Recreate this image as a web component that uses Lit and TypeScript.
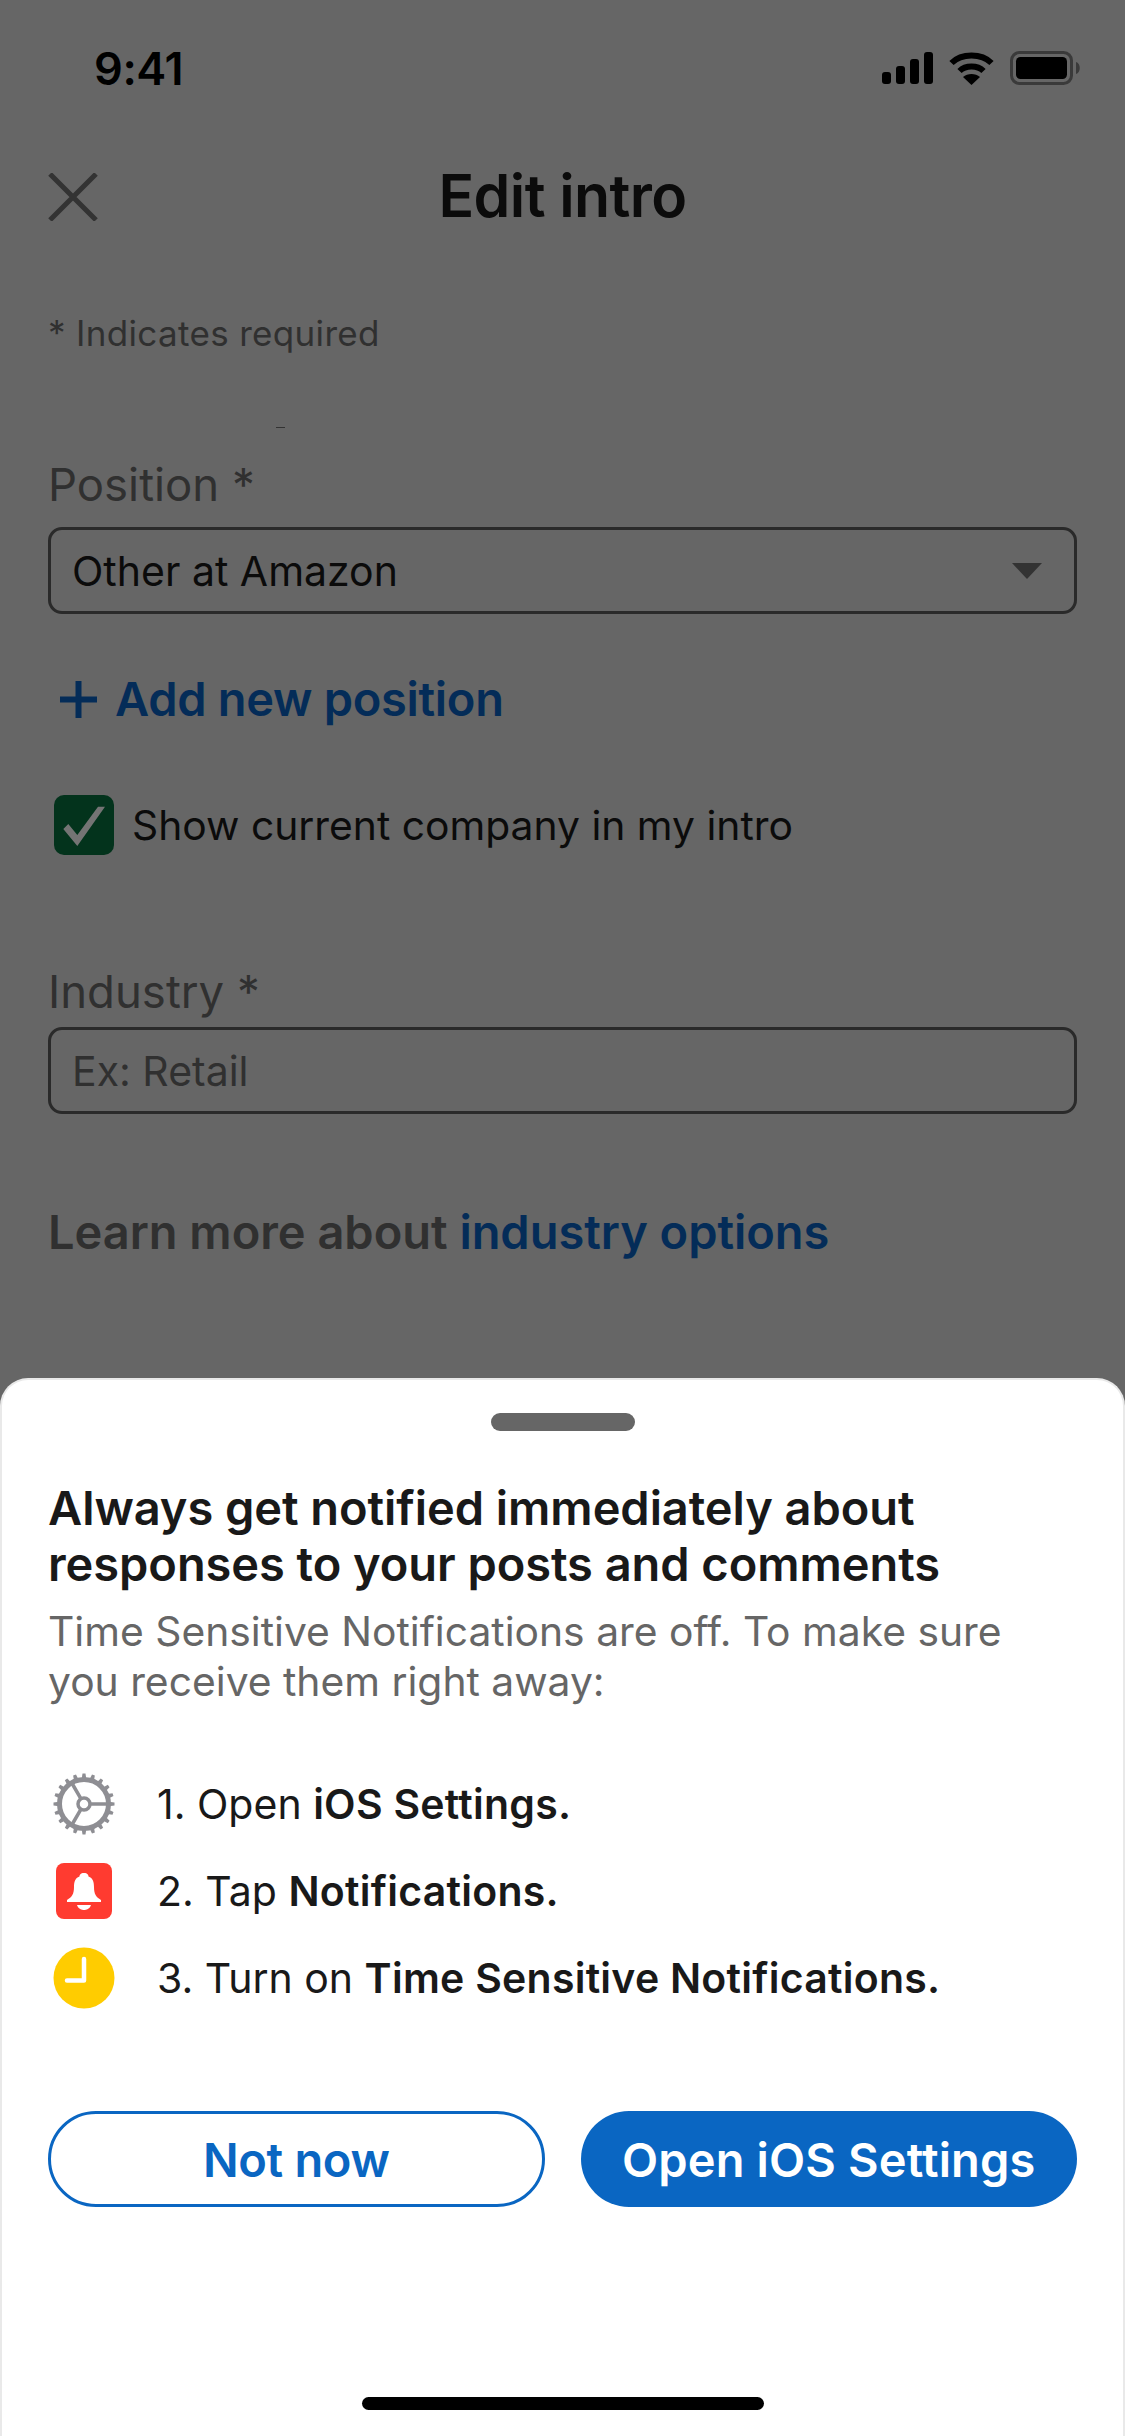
import { LitElement, html, css, svg } from 'lit';
import { customElement } from 'lit/decorators.js';

const FONT = css`Inter, "Liberation Sans", sans-serif`;

@customElement('app-root')
export class AppRoot extends LitElement {
  static styles = css`
    :host {
      display: flex;
      flex-direction: column;
      width: 1125px;
      height: 2436px;
      overflow: hidden;
      background: #666666;
      font-family: ${FONT};
      color: #0b0b0b;
    }
    .form { flex: 1; min-height: 0; display: flex; flex-direction: column; }

    .status { height: 136px; display: flex; align-items: center; justify-content: space-between; padding: 0 43px 0 94px; box-sizing: border-box; }
    .time { font-size: 45px; font-weight: 600; color: #000; letter-spacing: -0.4px; }
    .status-icons { display: flex; align-items: center; gap: 16px; }

    .nav { height: 120px; display: flex; align-items: center; justify-content: center; position: relative; }
    .close { position: absolute; left: 48px; top: 37px; }
    .title { font-size: 59px; font-weight: 600; letter-spacing: -0.6px; margin-top: -2px; }

    .body { padding: 0 48px; display: flex; flex-direction: column; }
    .required { font-size: 35px; color: #303030; margin-top: 55px; line-height: 44px; letter-spacing: 0.33px; }
    .tick { width: 9px; height: 1px; background: #333; margin: 72px 0 0 228px; }
    .label { font-size: 45.5px; color: #303030; line-height: 56px; }
    .position { margin-top: 29px; }
    .industry { margin-top: 109px; }
    .field { height: 87px; box-sizing: border-box; border: 3.5px solid #2a2a2a; border-radius: 14px; display: flex; align-items: center; justify-content: space-between; padding: 0 32px 0 21px; font-size: 41px; margin-top: 14px; }
    .field.tight { margin-top: 7px; }
    .placeholder { color: #303030; }
    .caret { width: 0; height: 0; border-left: 15px solid transparent; border-right: 15px solid transparent; border-top: 16px solid #333; }
    .add { display: flex; align-items: center; gap: 18px; margin: 57px 0 0 12px; font-size: 47px; font-weight: 600; color: #042c58; line-height: 56px; letter-spacing: -0.3px; }
    .check-row { display: flex; align-items: center; gap: 18px; margin: 68px 0 0 6px; font-size: 40.8px; }
    .box { width: 60px; height: 60px; border-radius: 10px; background: #03331c; flex-shrink: 0; }
    .box svg { display: block; }
    .learn { font-size: 47px; font-weight: 600; color: #303030; line-height: 56px; margin-top: 90px; letter-spacing: -0.03px; }
    .learn span { color: #042c58; }

    .sheet { height: 1058px; flex-shrink: 0; box-sizing: border-box; background: #fff; border: 2px solid #e9e9e9; border-bottom: none; border-radius: 28px 28px 0 0; padding: 33px 46px 26px; display: flex; flex-direction: column; }
    .handle { align-self: center; width: 144px; height: 18px; border-radius: 9px; background: #666; }
    h2 { margin: 49px 0 0; font-size: 47px; line-height: 56px; font-weight: 600; letter-spacing: -0.06px; color: #191919; }
    .sub { margin: 14px 0 0; font-size: 40.8px; line-height: 50px; color: #666; }
    .steps { display: flex; flex-direction: column; gap: 27px; margin-top: 68px; }
    .step { display: flex; align-items: center; height: 60px; font-size: 41px; color: #191919; gap: 42px; }
    .step b { font-weight: 600; letter-spacing: 0.25px; }
    .step svg { flex-shrink: 0; margin-left: 5px; }
    .buttons { display: grid; grid-template-columns: 1fr 1fr; gap: 36px; margin-top: 103px; }
    .btn { height: 96px; border-radius: 48px; box-sizing: border-box; display: flex; align-items: center; justify-content: center; font-size: 47px; font-weight: 600; letter-spacing: -0.3px; }
    .ghost { border: 3px solid #0a66c2; color: #0a66c2; }
    .solid { background: #0a66c2; color: #fff; letter-spacing: 0.15px; }
    .spacer { flex: 1; }
    .home { align-self: center; width: 402px; height: 13px; border-radius: 7px; background: #000; }
  `;

  private gear() {
    const teeth = Array.from({ length: 20 }, (_, i) => i * 18);
    return html`<svg width="62" height="62" viewBox="0 0 62 62" fill="none" stroke="#8e8e93">
      ${teeth.map(a => svg`<path d="M28.700 6L29.500 0.500H32.500L33.300 6Z" fill="#8e8e93" stroke="none" transform="rotate(${a} 31 31)"></path>`)}
      <circle cx="31" cy="31" r="24.500" stroke-width="5"></circle>
      <circle cx="31" cy="31" r="6" stroke-width="3.500"></circle>
      <path d="M37 31H54M28 25.800L18.500 9.500M28 36.200L18.500 52.500" stroke-width="3.500"></path>
    </svg>`;
  }

  render() {
    return html`
      <div class="form">
        <div class="status">
          <span class="time">9:41</span>
          <div class="status-icons">
            <svg width="51" height="32" viewBox="0 0 51 32" fill="#000">
              <rect x="0" y="20" width="9" height="12" rx="3"></rect>
              <rect x="14" y="14" width="9" height="18" rx="3"></rect>
              <rect x="28" y="7" width="9" height="25" rx="3"></rect>
              <rect x="42" y="0" width="9" height="32" rx="3"></rect>
            </svg>
            <svg width="45" height="33" viewBox="0 0 45 33" fill="none" stroke="#000" stroke-width="6">
              <path d="M2.500 11C12.500 1 32.500 1 42.500 11"></path>
              <path d="M10.500 19C16.500 13 28.500 13 34.500 19"></path>
              <path d="M22.500 33L14 25C18.500 21 26.500 21 31 25Z" fill="#000" stroke="none"></path>
            </svg>
            <svg width="72" height="34" viewBox="0 0 72 34">
              <rect x="1.500" y="1.500" width="60" height="31" rx="8" fill="none" stroke="#3a3a3a" stroke-width="3"></rect>
              <rect x="6" y="6" width="51" height="22" rx="4.500" fill="#000"></rect>
              <path d="M66 11C71 12 71 22 66 23Z" fill="#3a3a3a"></path>
            </svg>
          </div>
        </div>
        <div class="nav">
          <svg class="close" width="50" height="48" viewBox="0 0 50 48" stroke="#333" stroke-width="5">
            <path d="M2 1L48 47M48 1L2 47"></path>
          </svg>
          <span class="title">Edit intro</span>
        </div>
        <div class="body">
          <div class="required">* Indicates required</div>
          <div class="tick"></div>
          <div class="label position">Position *</div>
          <div class="field">Other at Amazon<span class="caret"></span></div>
          <div class="add">
            <svg width="37" height="37" viewBox="0 0 37 37" stroke="#042c58" stroke-width="6"><path d="M18.500 0V37M0 18.500H37"></path></svg>
            Add new position
          </div>
          <div class="check-row">
            <span class="box">
              <svg width="60" height="60" viewBox="0 0 60 60"><path d="M9.300 34L23.300 51L51 11.700H44L23.300 40L14.300 29Z" fill="#747474"></path></svg>
            </span>
            Show current company in my intro
          </div>
          <div class="label industry">Industry *</div>
          <div class="field tight"><span class="placeholder">Ex: Retail</span></div>
          <div class="learn">Learn more about <span>industry options</span></div>
        </div>
      </div>
      <div class="sheet">
        <div class="handle"></div>
        <h2>Always get notified immediately about responses to your posts and comments</h2>
        <p class="sub">Time Sensitive Notifications are off. To make sure you receive them right away:</p>
        <div class="steps">
          <div class="step">${this.gear()}<span>1. Open <b>iOS Settings.</b></span></div>
          <div class="step">
            <svg width="62" height="60" viewBox="0 0 62 60">
              <rect x="3" y="2" width="56" height="56" rx="8" fill="#ff3b30"></rect>
              <path d="M31 12C27.500 12 26.500 14 26.500 15.500C22 17 21 21 21 26C21 33 19 36 14 39V41H48V39C43 36 41 33 41 26C41 21 40 17 35.500 15.500C35.500 14 34.500 12 31 12Z" fill="#fff"></path>
              <path d="M24 44H38C37 48 33 49 31 49C29 49 25 48 24 44Z" fill="#fff"></path>
            </svg>
            <span>2. Tap <b>Notifications.</b></span>
          </div>
          <div class="step">
            <svg width="62" height="62" viewBox="0 0 62 62">
              <circle cx="31" cy="31" r="30.500" fill="#ffcc00"></circle>
              <path d="M31 12V33.500H14" fill="none" stroke="#fff" stroke-width="4.500" stroke-linecap="round" stroke-linejoin="round"></path>
            </svg>
            <span>3. Turn on <b>Time Sensitive Notifications.</b></span>
          </div>
        </div>
        <div class="buttons">
          <div class="btn ghost">Not now</div>
          <div class="btn solid">Open iOS Settings</div>
        </div>
        <div class="spacer"></div>
        <div class="home"></div>
      </div>
    `;
  }
}
